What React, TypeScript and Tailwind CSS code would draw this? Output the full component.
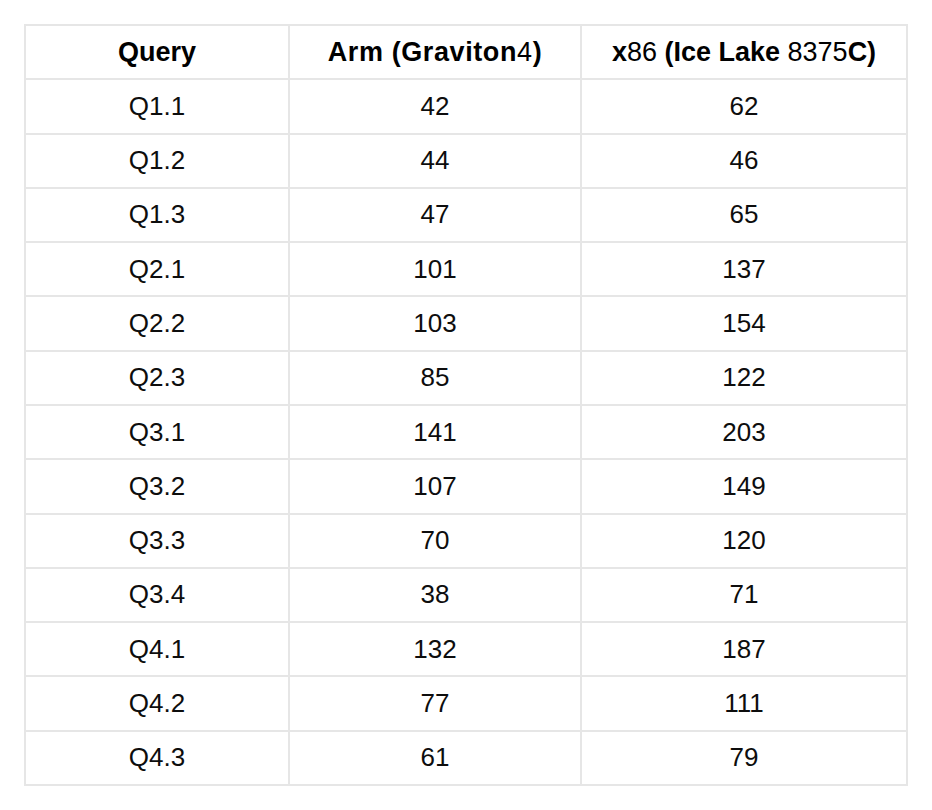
import React from "react";

const rows: [string, string, string][] = [
  ["Q1.1", "42", "62"],
  ["Q1.2", "44", "46"],
  ["Q1.3", "47", "65"],
  ["Q2.1", "101", "137"],
  ["Q2.2", "103", "154"],
  ["Q2.3", "85", "122"],
  ["Q3.1", "141", "203"],
  ["Q3.2", "107", "149"],
  ["Q3.3", "70", "120"],
  ["Q3.4", "38", "71"],
  ["Q4.1", "132", "187"],
  ["Q4.2", "77", "111"],
  ["Q4.3", "61", "79"],
];

const cell =
  "flex items-center justify-center h-[54.29px] border-r-2 border-b-2 border-[#e6e6e6]";

export default function App() {
  return (
    <div
      className="w-[932px] h-[810px] bg-white pt-[24px] pl-[24px]"
      style={{ fontFamily: '"Liberation Sans", Arial, sans-serif' }}
    >
      <div className="grid grid-cols-[264px_292px_326px] w-[884px] border-l-2 border-t-2 border-[#e6e6e6] text-[26px] text-[#0d0d0d]">
        <div className={`${cell} font-bold text-black text-[27px]`}>Query</div>
        <div className={`${cell} font-bold text-black text-[27px] tracking-[0.6px]`}>
          Arm (Graviton<span className="font-normal">4</span>)
        </div>
        <div className={`${cell} font-bold text-black text-[27px]`}>
          <span>
            x<span className="font-normal">86</span> (Ice Lake{" "}
            <span className="font-normal">8375</span>C)
          </span>
        </div>
        {rows.map((r) => (
          <React.Fragment key={r[0]}>
            <div className={cell}>{r[0]}</div>
            <div className={cell}>{r[1]}</div>
            <div className={cell}>{r[2]}</div>
          </React.Fragment>
        ))}
      </div>
    </div>
  );
}
